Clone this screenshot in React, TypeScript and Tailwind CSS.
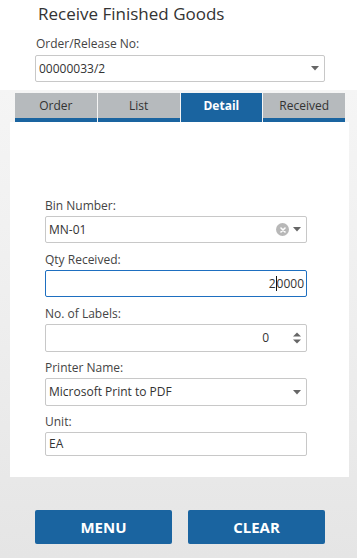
import React from 'react';

const font = { fontFamily: '"Open Sans", "Noto Sans", Arial, sans-serif' };

const Caret = () => (
  <svg width="8" height="5" viewBox="0 0 8 5" className="shrink-0">
    <path d="M0 0 L8 0 L4 4.5 Z" fill="#666" />
  </svg>
);

const Label: React.FC<{ text: string }> = ({ text }) => (
  <div className="h-[16px] text-[12px] leading-[16px] text-[#444] mb-[2px]">{text}</div>
);

const tabs = ['Order', 'List', 'Detail', 'Received'];

export default function App() {
  return (
    <div className="w-[357px] h-[558px] flex flex-col overflow-hidden" style={font}>
      {/* Header */}
      <div className="bg-white h-[90px] shrink-0 pl-[35px]">
        <div className="pl-[3px] pt-[2px] text-[17px] leading-[24px] text-[#333]">Receive Finished Goods</div>
        <div className="mt-[10px] pl-[1px] text-[12px] leading-[16px] text-[#444]">Order/Release No:</div>
        <div className="mt-[3px] w-[290px] h-[27px] border border-[#c8c8c8] rounded-[2px] bg-white flex items-center pl-[3px] pr-[5px]">
          <span className="flex-1 text-[12px] text-[#333]">00000033/2</span>
          <Caret />
        </div>
      </div>

      {/* Body */}
      <div className="flex-1 flex flex-col bg-gradient-to-b from-[#f5f5f5] via-[#eeeeee] to-[#e5e5e5]">
        <div className="mt-[3px] ml-[15px] w-[330px] flex gap-[1px] h-[29px]">
          {tabs.map(t => {
            const active = t === 'Detail';
            return (
              <div
                key={t}
                className={`flex-1 flex flex-col ${active ? 'bg-[#1a64a0]' : 'bg-[#b6babd]'}`}
              >
                <div
                  className={`flex-1 flex items-center justify-center text-[12px] ${
                    active ? 'text-white font-bold' : 'text-[#333]'
                  }`}
                >
                  {t}
                </div>
                <div className="h-[4px] bg-[#1a64a0]" />
              </div>
            );
          })}
        </div>

        {/* Panel */}
        <div className="mx-[10px] w-[339px] bg-white pt-[76px] pb-[21px] px-[35px]">
          <div className="w-[262px]">
            <Label text="Bin Number:" />
            <div className="h-[27px] border border-[#c8c8c8] rounded-[2px] flex items-center pl-[3px] pr-[5px] mb-[9px]">
              <span className="flex-1 text-[12px] text-[#333]">MN-01</span>
              <span className="w-[13px] h-[13px] rounded-full bg-[#b8b8b8] flex items-center justify-center mr-[4px]">
                <svg width="6" height="6" viewBox="0 0 6 6">
                  <path d="M1 1 L5 5 M5 1 L1 5" stroke="#fff" strokeWidth="1.6" strokeLinecap="round" />
                </svg>
              </span>
              <Caret />
            </div>

            <Label text="Qty Received:" />
            <div className="h-[27px] border border-[#1e6fc0] rounded-[2px] flex items-center justify-end pr-[2px] mb-[9px]">
              <span className="text-[12px] text-[#333]">2</span>
              <span className="w-[1px] h-[15px] bg-[#111]" />
              <span className="text-[12px] text-[#333]">0000</span>
            </div>

            <Label text="No. of Labels:" />
            <div className="h-[28px] border border-[#c8c8c8] rounded-[2px] flex items-center justify-end pr-[5px] mb-[8px]">
              <span className="text-[12px] text-[#333] mr-[24px]">0</span>
              <svg width="8" height="12" viewBox="0 0 8 12">
                <path d="M0 4.5 L8 4.5 L4 0.5 Z" fill="#666" />
                <path d="M0 7.5 L8 7.5 L4 11.5 Z" fill="#666" />
              </svg>
            </div>

            <Label text="Printer Name:" />
            <div className="h-[28px] border border-[#c8c8c8] rounded-[2px] flex items-center pl-[3px] pr-[5px] mb-[8px]">
              <span className="flex-1 text-[12px] text-[#333]">Microsoft Print to PDF</span>
              <Caret />
            </div>

            <Label text="Unit:" />
            <div className="h-[24px] border border-[#c8c8c8] rounded-[2px] flex items-center pl-[3px]">
              <span className="text-[12px] text-[#333]">EA</span>
            </div>
          </div>
        </div>

        {/* Buttons */}
        <div className="mt-[33px] pl-[35px] flex gap-[16px]">
          <button className="w-[137px] h-[34px] rounded-[2px] bg-[#1a64a0] text-white font-bold text-[15px]">MENU</button>
          <button className="w-[137px] h-[34px] rounded-[2px] bg-[#1a64a0] text-white font-bold text-[15px]">CLEAR</button>
        </div>
      </div>
    </div>
  );
}
